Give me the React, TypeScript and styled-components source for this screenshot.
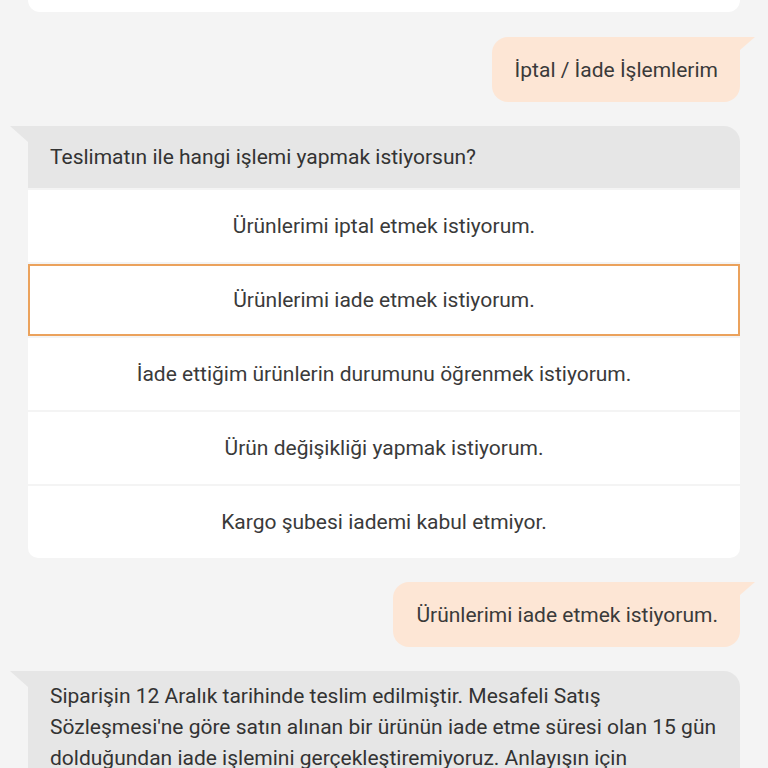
import React from 'react';
import styled, { createGlobalStyle } from 'styled-components';

const options = [
  'Ürünlerimi iptal etmek istiyorum.',
  'Ürünlerimi iade etmek istiyorum.',
  'İade ettiğim ürünlerin durumunu öğrenmek istiyorum.',
  'Ürün değişikliği yapmak istiyorum.',
  'Kargo şubesi iademi kabul etmiyor.',
];

const App = () => {
  return (
    <>
      <GlobalStyle />
      <Page>
        <PrevCard />
        <UserRow>
          <UserBubble>İptal / İade İşlemlerim</UserBubble>
        </UserRow>
        <BotCard>
          <BotHeader>Teslimatın ile hangi işlemi yapmak istiyorsun?</BotHeader>
          {options.map((text, i) => (
            <Option key={text} $selected={i === 1} $last={i === options.length - 1}>
              {text}
            </Option>
          ))}
        </BotCard>
        <UserRow>
          <UserBubble>Ürünlerimi iade etmek istiyorum.</UserBubble>
        </UserRow>
        <BotMessage>
          Siparişin 12 Aralık tarihinde teslim edilmiştir. Mesafeli Satış Sözleşmesi'ne göre satın
          alınan bir ürünün iade etme süresi olan 15 gün dolduğundan iade işlemini
          gerçekleştiremiyoruz. Anlayışın için teşekkürler.
        </BotMessage>
      </Page>
    </>
  );
};

export default App;

const GlobalStyle = createGlobalStyle`
  html, body {
    margin: 0;
    padding: 0;
    background: #f4f4f4;
  }
  body {
    font-family: Roboto, 'Noto Sans', sans-serif;
    color: #383838;
  }
`;

const Page = styled.div`
  height: 768px;
  overflow: hidden;
  padding: 0 28px;
  display: flex;
  flex-direction: column;
  gap: 24px;

  & > * {
    flex-shrink: 0;
  }
`;

const PrevCard = styled.div`
  height: 12px;
  margin-bottom: 1px;
  background: #ffffff;
  border-radius: 0 0 12px 12px;
`;

const UserRow = styled.div`
  display: flex;
  justify-content: flex-end;
`;

const UserBubble = styled.div`
  position: relative;
  background: #fde6d5;
  border-radius: 16px 0 16px 16px;
  padding: 0 22px 0 23px;
  height: 65px;
  display: flex;
  align-items: center;
  font-size: 21px;
  color: #3a3a3a;

  &::after {
    content: '';
    position: absolute;
    top: 0;
    right: -15px;
    width: 15px;
    height: 13px;
    background: #fde6d5;
    clip-path: polygon(0 0, 100% 0, 0 100%);
  }
`;

const BotCard = styled.div`
  position: relative;
  display: flex;
  flex-direction: column;
  gap: 2px;

  &::before {
    content: '';
    position: absolute;
    top: 0;
    left: -18px;
    width: 18px;
    height: 16px;
    background: #e6e6e6;
    clip-path: polygon(0 0, 100% 0, 100% 100%);
  }
`;

const BotHeader = styled.div`
  background: #e6e6e6;
  border-radius: 0 16px 0 0;
  height: 62px;
  padding: 0 22px;
  display: flex;
  align-items: center;
  font-size: 21px;
  color: #333333;
`;

const Option = styled.div<{ $selected?: boolean; $last?: boolean }>`
  background: #ffffff;
  height: 72px;
  box-sizing: border-box;
  display: flex;
  align-items: center;
  justify-content: center;
  font-size: 21px;
  color: #3a3a3a;
  border: 2px solid ${(p) => (p.$selected ? '#eba25c' : 'transparent')};
  border-radius: ${(p) => (p.$last ? '0 0 10px 10px' : '0')};
`;

const BotMessage = styled.div`
  position: relative;
  background: #e6e6e6;
  border-radius: 0 16px 16px 16px;
  padding: 10px 20px 14px 22px;
  font-size: 21px;
  line-height: 31px;
  color: #333333;

  &::before {
    content: '';
    position: absolute;
    top: 0;
    left: -18px;
    width: 18px;
    height: 16px;
    background: #e6e6e6;
    clip-path: polygon(0 0, 100% 0, 100% 100%);
  }
`;
